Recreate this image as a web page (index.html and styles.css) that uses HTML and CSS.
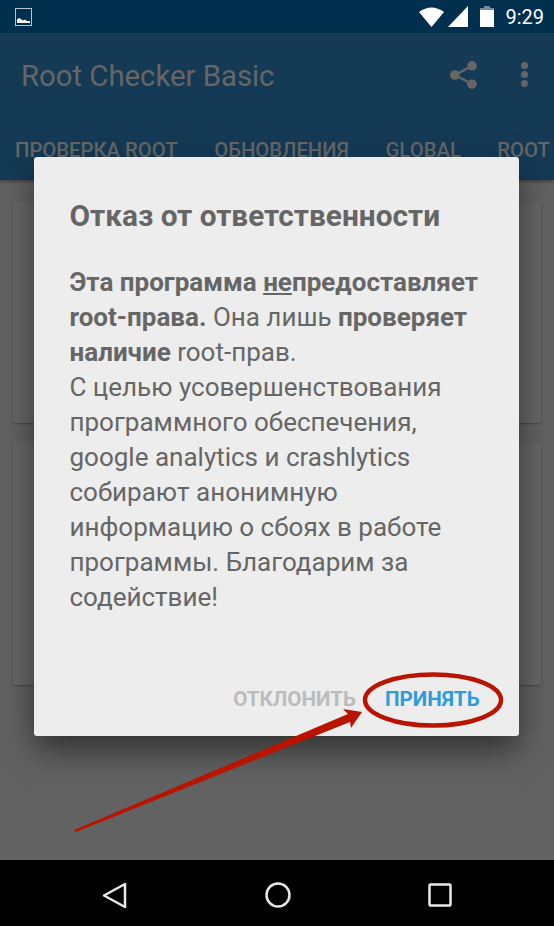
FILE: index.html
```html
<!DOCTYPE html>
<html lang="ru">
<head>
  <meta charset="UTF-8">
  <meta name="viewport" content="width=device-width, initial-scale=1.0">
  <title>Root Checker Basic</title>
  <link rel="stylesheet" href="styles.css">
</head>
<body>
  <div class="phone">
    <div class="status-bar">
      <svg class="notif-icon" width="17" height="18" viewBox="0 0 17 18">
        <rect x="0.5" y="0.5" width="16" height="17" fill="#00304e" stroke="#b5c3cd"/>
        <path d="M2 15V11.5L4 10L6.5 11.5L8 12.5L10 11.5L12 13L15 13V15Z" fill="#fff"/>
      </svg>
      <div class="status-right">
        <svg class="wifi" width="25" height="21" viewBox="0 0 25 21"><path d="M0 6Q12.500 -3 25 6L12.500 21Z" fill="#fff"/></svg>
        <svg class="signal" width="20" height="21" viewBox="0 0 20 21"><path d="M0 21L20 0V21Z" fill="#fff"/></svg>
        <svg class="battery" width="14" height="21" viewBox="0 0 14 21"><path d="M4 0H10V2H14V5H0V2H4Z" fill="#6f8ba1"/><rect y="4" width="14" height="17" fill="#fff"/></svg>
        <span class="clock">9:29</span>
      </div>
    </div>

    <header class="app-bar">
      <div class="toolbar">
        <h1>Root Checker Basic</h1>
        <svg class="share" width="27" height="28" viewBox="0 0 27 28">
          <path d="M22 5L5 14L22 23" fill="none" stroke="#666" stroke-width="2.500"/>
          <circle cx="22" cy="4.800" r="4.800" fill="#666"/>
          <circle cx="4.800" cy="14" r="4.800" fill="#666"/>
          <circle cx="22" cy="23.200" r="4.800" fill="#666"/>
        </svg>
        <div class="dots"><span></span><span></span><span></span></div>
      </div>
      <nav class="tabs">
        <span>ПРОВЕРКА ROOT</span>
        <span>ОБНОВЛЕНИЯ</span>
        <span>GLOBAL</span>
        <span>ROOT ДОСТУП</span>
      </nav>
    </header>

    <main class="content">
      <div class="card card-first"></div>
      <div class="card card-second"></div>
    </main>

    <footer class="nav-bar">
      <svg width="25" height="27" viewBox="0 0 25 27"><path d="M23 2V25L2 13.500Z" fill="none" stroke="#e8e8e8" stroke-width="2.500" stroke-linejoin="round"/></svg>
      <svg width="26" height="26" viewBox="0 0 26 26"><circle cx="13" cy="13" r="11.500" fill="none" stroke="#e8e8e8" stroke-width="2.500"/></svg>
      <svg width="24" height="24" viewBox="0 0 24 24"><rect x="1.500" y="1.500" width="21" height="21" rx="1" fill="none" stroke="#e8e8e8" stroke-width="2.500"/></svg>
    </footer>

    <section class="dialog">
      <h2>Отказ от ответственности</h2>
      <p class="dialog-text"><b>Эта программа <u>не</u>предоставляет root-права.</b> Она лишь <b>проверяет наличие</b> root-прав.<br>С целью усовершенствования программного обеспечения, google analytics и crashlytics собирают анонимную информацию о сбоях в работе программы. Благодарим за содействие!</p>
      <div class="dialog-actions">
        <button class="btn btn-decline">ОТКЛОНИТЬ</button>
        <button class="btn btn-accept">ПРИНЯТЬ</button>
      </div>
    </section>

    <svg class="annotation" width="554" height="926" viewBox="0 0 554 926">
      <ellipse cx="433" cy="700" rx="68" ry="25.500" fill="none" stroke="#b81400" stroke-width="4.500"/>
      <path d="M74 830L348 714L343 709L362 712L351 728L350 722L76 832Z" fill="#b81400"/>
    </svg>
  </div>
</body>
</html>
```

FILE: styles.css
```css
body {
  margin: 0;
  font-family: 'Roboto', sans-serif;
}

.phone {
  position: relative;
  display: flex;
  flex-direction: column;
  width: 554px;
  height: 926px;
  overflow: hidden;
  background-color: #626262;
}

.status-bar {
  display: flex;
  justify-content: space-between;
  align-items: center;
  flex: none;
  height: 33px;
  padding: 0 10px 0 15px;
  background-color: #00304e;
}

.status-right {
  display: flex;
  align-items: center;
}

.signal {
  margin-left: 4px;
}

.battery {
  margin-left: 12px;
}

.clock {
  margin-left: 11px;
  color: #fff;
  font-size: 20px;
}

.app-bar {
  flex: none;
  height: 147px;
  background-color: #153a55;
  box-shadow: 0 2px 3px rgba(0,0,0,0.3);
}

.toolbar {
  display: flex;
  align-items: center;
  height: 83px;
  padding: 0 26px 0 21px;
}

.toolbar h1 {
  flex: 1;
  margin: 0;
  padding-top: 2px;
  color: #666;
  font-size: 29.300px;
  font-weight: 400;
}

.dots {
  display: flex;
  flex-direction: column;
  gap: 2px;
  margin-left: 44px;
}

.dots span {
  width: 7px;
  height: 7px;
  border-radius: 50%;
  background-color: #666;
}

.tabs {
  display: flex;
  gap: 36.500px;
  margin-top: 22px;
  padding-left: 15px;
  white-space: nowrap;
  color: #666;
  font-size: 20.300px;
  font-weight: 500;
}

.content {
  flex: 1;
  display: flex;
  flex-direction: column;
  gap: 20px;
  padding: 23px 13px 0;
}

.card {
  border-radius: 3px;
  background-color: #676767;
  box-shadow: 0 1px 2px rgba(0,0,0,0.3);
}

.card-first {
  height: 220px;
}

.card-second {
  height: 242px;
}

.nav-bar {
  display: flex;
  justify-content: space-between;
  align-items: center;
  flex: none;
  box-sizing: border-box;
  height: 66px;
  padding: 4px 102px 0;
  background-color: #000;
}

.dialog {
  position: absolute;
  left: 34px;
  top: 157px;
  display: flex;
  flex-direction: column;
  box-sizing: border-box;
  width: 485px;
  height: 579px;
  padding: 40px 35.500px 0;
  border-radius: 3px;
  background-color: #ededed;
  box-shadow: 0 14px 32px rgba(0,0,0,0.5);
  color: #666;
}

.dialog h2 {
  margin: 0;
  font-size: 29.800px;
  font-weight: 700;
  line-height: 38px;
}

.dialog-text {
  flex: 1;
  margin: 30px 0 0;
  font-size: 26px;
  line-height: 35px;
}

.dialog-text b {
  font-weight: 700;
}

.dialog-actions {
  display: flex;
  justify-content: flex-end;
  gap: 29px;
  margin: 0 4px 25px 0;
}

.btn {
  padding: 0;
  border: 0;
  background: none;
  font-family: inherit;
  font-size: 20.600px;
  font-weight: 700;
}

.btn-decline {
  color: #bcbcbc;
}

.btn-accept {
  color: #2f9bdc;
}

.annotation {
  position: absolute;
  left: 0;
  top: 0;
}
```
